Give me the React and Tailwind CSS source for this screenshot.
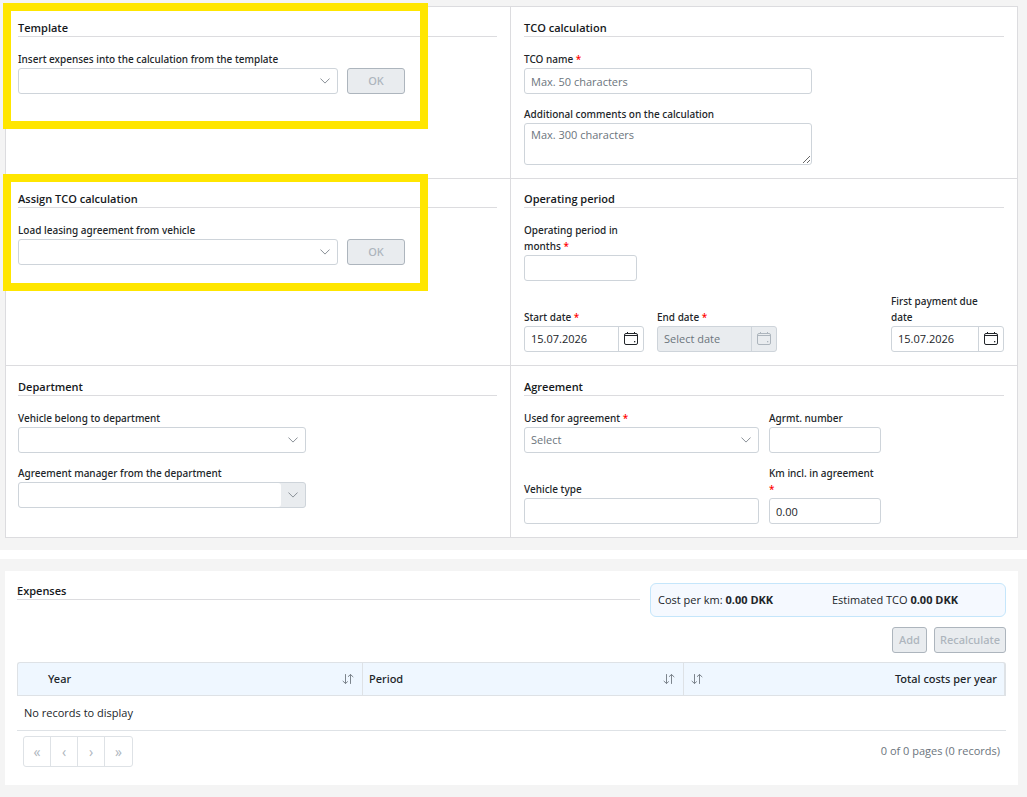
import React, { useState } from 'react';

const ChevronIcon = () => (
    <svg className="w-2.5 h-1.5" viewBox="0 0 10 6" fill="none" stroke="#8a9097" strokeWidth="1" strokeLinecap="round" strokeLinejoin="round">
        <path d="M0.7 0.8L5 5.1L9.3 0.8" />
    </svg>
);

const CalendarIcon = () => (
    <svg className="w-3.5 h-3.5" viewBox="0 0 14 14" fill="none" stroke="currentColor" strokeWidth="1">
        <rect x="0.5" y="1.5" width="13" height="11" rx="1.5" />
        <path d="M0.5 3.5H13.5M3.5 0V2M10.5 0V2" />
        <rect x="10" y="9" width="1.3" height="1.3" fill="currentColor" stroke="none" />
    </svg>
);

const SortIcon = () => (
    <svg className="w-3 h-3 shrink-0" viewBox="0 0 12 12" fill="none" stroke="#7d858d" strokeWidth="1" strokeLinecap="round" strokeLinejoin="round">
        <path d="M3.5 1.5V10.5M1 8.2L3.5 10.5L5.5 8.7M8.5 10.5V1.5M6.3 3.5L8.5 1.5L11 3.8" />
    </svg>
);

const Label = ({ htmlFor, required, className = "pr-1", children }) => (
    <label htmlFor={htmlFor} className={`block pb-px font-['Noto_Sans',sans-serif] text-[10px] leading-4 font-medium text-[#212529] ${className}`}>
        {children}
        {required && <span className="text-[#ff0000]"> *</span>}
    </label>
);

const inputClass = "block w-full h-[26px] rounded-[3px] border border-[#ced4da] bg-white px-1.5 text-[11px] text-[#212529] placeholder:text-[#6c757d] outline-none";

const TextField = ({ id, label, required, className, ...rest }) => (
    <div className={className}>
        <Label htmlFor={id} required={required}>{label}</Label>
        <input id={id} type="text" className={inputClass} {...rest} />
    </div>
);

const SelectField = ({ id, label, required, className, placeholder = "" }) => (
    <div className={className}>
        <Label htmlFor={id} required={required}>{label}</Label>
        <div className="relative">
            <select id={id} className="block w-full h-[26px] appearance-none rounded-[3px] border border-[#ced4da] bg-white px-1.5 text-[11px] text-[#6c757d] outline-none">
                <option value="">{placeholder}</option>
            </select>
            <span className="pointer-events-none absolute inset-y-0 right-2 flex items-center">
                <ChevronIcon />
            </span>
        </div>
    </div>
);

const DateField = ({ id, label, required, className, value, disabled }) => {
    const [date, setDate] = useState(value);

    return (
        <div className={className}>
            <Label htmlFor={id} required={required} className="pr-4">{label}</Label>
            <div className={`flex h-[26px] overflow-hidden rounded-[3px] border border-[#ced4da] ${disabled ? "bg-[#e9ecef] text-[#adb5bd]" : "bg-white text-[#212529]"}`}>
                <input
                    id={id}
                    type="text"
                    value={date}
                    disabled={disabled}
                    placeholder="Select date"
                    onChange={(e) => setDate(e.target.value)}
                    className="min-w-0 flex-1 px-1.5 text-[11px] placeholder:text-[#6c757d] outline-none"
                />
                <button type="button" aria-label="Open calendar" disabled={disabled} className="flex w-[25px] items-center justify-center border-l border-[#ced4da]">
                    <CalendarIcon />
                </button>
            </div>
        </div>
    );
};

const DisabledButton = ({ className, children }) => (
    <button type="button" disabled className={`h-[26px] rounded-[3px] border border-[#adb5bd] bg-[#e9ecef] font-['Noto_Sans',sans-serif] text-[11px] font-medium text-[#adb5bd] ${className}`}>
        {children}
    </button>
);

const Heading = ({ children }) => (
    <h2 className="border-b border-[#dcdcdf] text-[11px] leading-4 font-semibold text-[#16191c]">{children}</h2>
);

const Panel = ({ title, className, children }) => (
    <section className={`relative border-[#dcdcdf] pb-[13px] ${className}`}>
        <Heading>{title}</Heading>
        <div className="mt-3.5 flex flex-col gap-3">{children}</div>
    </section>
);

const columns = [
    { name: "Year", className: "w-[345px] pl-[30px] pr-2" },
    { name: "Period", className: "w-[321px] pl-1.5 pr-2" },
    { name: "Total costs per year", className: "border-r-2 px-[7px]", reverse: true },
];

const pages = [
    { sign: "«", name: "First page" },
    { sign: "‹", name: "Previous page" },
    { sign: "›", name: "Next page" },
    { sign: "»", name: "Last page" },
];

const App = () => {
    return (
        <main className="flex min-h-screen flex-col gap-[9px] bg-white font-['Open_Sans',sans-serif] text-[11px] text-[#212529]">
            <div className="bg-[#f4f4f4] pt-1.5 pr-[9px] pb-3 pl-[5px]">
                <div className="grid grid-cols-[504fr_507fr] border border-[#dcdcdf] bg-white">
                    <Panel title="Template" className="border-b pt-[13px] pl-3 pr-[13px]">
                        <div className="flex items-end gap-[9px]">
                            <SelectField id="template" label="Insert expenses into the calculation from the template" className="w-80" />
                            <DisabledButton className="w-[58px]">OK</DisabledButton>
                        </div>
                        {/* Highlight */}
                        <div className="pointer-events-none absolute -top-1 -left-[3px] h-[126px] w-[425px] border-8 border-[#ffe600]"></div>
                    </Panel>

                    <Panel title="TCO calculation" className="border-b border-l pt-[13px] px-[13px]">
                        <TextField id="tco-name" label="TCO name" required placeholder="Max. 50 characters" className="w-72" />
                        <div className="w-72">
                            <Label htmlFor="comments">Additional comments on the calculation</Label>
                            <textarea id="comments" placeholder="Max. 300 characters" className="block h-[42px] w-full resize rounded-[3px] border border-[#ced4da] px-1.5 py-[3px] text-[11px] leading-4 placeholder:text-[#6c757d] outline-none"></textarea>
                        </div>
                    </Panel>

                    <Panel title="Assign TCO calculation" className="border-b pt-3 pl-3 pr-[13px]">
                        <div className="flex items-end gap-[9px]">
                            <SelectField id="vehicle" label="Load leasing agreement from vehicle" className="w-80" />
                            <DisabledButton className="w-[58px]">OK</DisabledButton>
                        </div>
                        {/* Highlight */}
                        <div className="pointer-events-none absolute -top-[5px] -left-[3px] h-[117px] w-[425px] border-8 border-[#ffe600]"></div>
                    </Panel>

                    <Panel title="Operating period" className="border-b border-l pt-3 px-[13px]">
                        <TextField id="months" label="Operating period in months" required className="w-[113px]" />
                        <div className="flex items-end gap-[13px]">
                            <DateField id="start" label="Start date" required value="15.07.2026" className="w-[120px]" />
                            <DateField id="end" label="End date" required value="" disabled className="w-[120px]" />
                            <DateField id="due" label="First payment due date" value="15.07.2026" className="ml-auto w-[113px]" />
                        </div>
                    </Panel>

                    <Panel title="Department" className="pt-[13px] pl-3 pr-[13px]">
                        <SelectField id="department" label="Vehicle belong to department" className="w-72" />
                        <div className="w-72">
                            <Label htmlFor="manager">Agreement manager from the department</Label>
                            <div className="flex h-[26px] items-center rounded-[3px] border border-[#ced4da] bg-[#e9ecef]">
                                <select id="manager" className="h-full flex-1 appearance-none rounded-[3px] bg-white px-1.5 text-[11px] outline-none">
                                    <option value=""></option>
                                </select>
                                <span className="flex w-6 justify-center">
                                    <ChevronIcon />
                                </span>
                            </div>
                        </div>
                    </Panel>

                    <Panel title="Agreement" className="border-l pt-[13px] px-[13px]">
                        <div className="flex items-end gap-2.5">
                            <SelectField id="agreement" label="Used for agreement" required placeholder="Select" className="w-[235px]" />
                            <TextField id="number" label="Agrmt. number" className="w-28" />
                        </div>
                        <div className="flex items-end gap-2.5">
                            <TextField id="type" label="Vehicle type" className="w-[235px]" />
                            <TextField id="km" label="Km incl. in agreement" required defaultValue="0.00" className="w-28" />
                        </div>
                    </Panel>
                </div>
            </div>

            <div className="flex-1 bg-[#f4f4f4] pt-3 pr-[9px] pb-3 pl-[5px]">
                <section className="bg-white px-3 pt-3 pb-[18px]">
                    <div className="flex gap-2.5">
                        <div className="flex-1">
                            <Heading>Expenses</Heading>
                        </div>
                        <div className="flex h-[34px] w-[356px] items-center rounded-md border border-[#c5e6fb] bg-[#f5f9ff] px-[7px]">
                            <p className="w-[174px]">Cost per km: <b>0.00 DKK</b></p>
                            <p>Estimated TCO <b>0.00 DKK</b></p>
                        </div>
                    </div>

                    <div className="mt-2.5 flex justify-end gap-[7px]">
                        <DisabledButton className="w-[35px]">Add</DisabledButton>
                        <DisabledButton className="w-[72px]">Recalculate</DisabledButton>
                    </div>

                    <table className="mt-[9px] w-full table-fixed border-separate border-spacing-0">
                        <thead>
                            <tr>
                                {columns.map((col) => (
                                    <th key={col.name} className={`h-[34px] border-y border-l border-[#dee2e6] bg-[#eff7ff] font-['Noto_Sans',sans-serif] font-medium first:rounded-tl-[3px] last:rounded-tr-[3px] ${col.className}`}>
                                        <div className={`flex items-center justify-between ${col.reverse ? "flex-row-reverse" : ""}`}>
                                            {col.name}
                                            <SortIcon />
                                        </div>
                                    </th>
                                ))}
                            </tr>
                        </thead>
                        <tbody>
                            <tr>
                                <td colSpan={3} className="h-[35px] border-b border-[#dee2e6] px-[7px]">No records to display</td>
                            </tr>
                        </tbody>
                    </table>

                    <div className="mt-[5px] flex items-center justify-between px-1.5">
                        <nav className="flex divide-x divide-[#dee2e6] rounded-[3px] border border-[#dee2e6]">
                            {pages.map((page) => (
                                <button key={page.name} type="button" disabled aria-label={page.name} className="h-[29px] w-[27px] text-sm text-[#adb5bd]">
                                    {page.sign}
                                </button>
                            ))}
                        </nav>
                        <p className="text-[#6c757d]">0 of 0 pages (0 records)</p>
                    </div>
                </section>
            </div>
        </main>
    );
};

export default App;
